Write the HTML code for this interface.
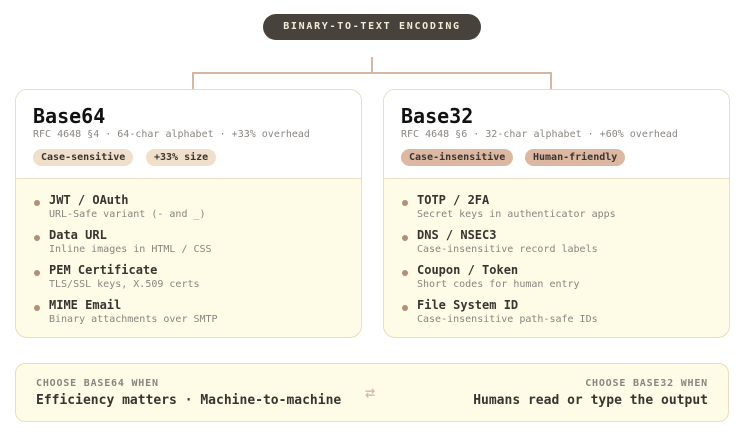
<!DOCTYPE html>
<html><head><meta charset="utf-8"><style>
*{margin:0;padding:0;box-sizing:border-box}
body{width:749px;height:443px;background:#fff;font-family:"DejaVu Sans Mono","Liberation Mono",monospace;position:relative;overflow:hidden;color:#3a3430}
.a{position:absolute;white-space:nowrap}
.pill{left:263px;top:14px;width:218px;height:26px;border-radius:13px;background:#48423d;color:#f3ead8;font-size:10px;font-weight:bold;letter-spacing:1.7px;text-align:center;line-height:26px}
.ln{position:absolute;background:#d6b7a3}
.card{position:absolute;top:89px;width:347px;height:249px;border:1px solid #ecdcc2;border-radius:12px;overflow:hidden;background:#fefbe6}
.hd{height:89px;background:#fff;border-bottom:1px solid #ecdcc2;position:relative}
.t{position:absolute;left:17px;top:14px;font-size:20px;font-weight:bold;color:#111}
.s{position:absolute;left:17px;top:39px;font-size:10px;color:#8a8580}
.tag{position:absolute;top:59px;height:17px;line-height:17px;border-radius:9px;padding:0 8px;font-size:10px;font-weight:bold;color:#3a3430}
.it{position:absolute;left:17px}
.it i{position:absolute;left:1px;top:6px;width:6px;height:6px;border-radius:50%;background:#b09078}
.it b{position:absolute;left:16px;top:-1px;font-size:12px;color:#3a3430;white-space:nowrap}
.it span{position:absolute;left:16px;top:15px;font-size:10px;color:#8a8580;white-space:nowrap}
.bot{position:absolute;left:15px;top:363px;width:714px;height:59px;border:1px solid #ecdcc2;border-radius:10px;background:#fefbe6}
.lb{font-size:10px;font-weight:bold;color:#8a8580;letter-spacing:0.8px}
.mt{font-size:13px;font-weight:bold;color:#3a3430}
</style></head><body>
<div class="a pill">BINARY-TO-TEXT ENCODING</div>
<div class="ln" style="left:371px;top:57px;width:2px;height:17px"></div>
<div class="ln" style="left:192px;top:72px;width:360px;height:2px"></div>
<div class="ln" style="left:192px;top:72px;width:2px;height:18px"></div>
<div class="ln" style="left:550px;top:72px;width:2px;height:18px"></div>

<div class="card" style="left:15px">
<div class="hd">
<div class="t">Base64</div>
<div class="s">RFC 4648 §4 · 64-char alphabet · +33% overhead</div>
<div class="tag" style="left:17px;background:#f0e0cb">Case-sensitive</div>
<div class="tag" style="left:130px;background:#f0e0cb">+33% size</div>
</div>
<div class="it" style="top:104px"><i></i><b>JWT / OAuth</b><span>URL-Safe variant (- and _)</span></div>
<div class="it" style="top:139px"><i></i><b>Data URL</b><span>Inline images in HTML / CSS</span></div>
<div class="it" style="top:174px"><i></i><b>PEM Certificate</b><span>TLS/SSL keys, X.509 certs</span></div>
<div class="it" style="top:209px"><i></i><b>MIME Email</b><span>Binary attachments over SMTP</span></div>
</div>

<div class="card" style="left:383px">
<div class="hd">
<div class="t">Base32</div>
<div class="s">RFC 4648 §6 · 32-char alphabet · +60% overhead</div>
<div class="tag" style="left:17px;background:#dcb8a3">Case-insensitive</div>
<div class="tag" style="left:141px;background:#dcb8a3">Human-friendly</div>
</div>
<div class="it" style="top:104px"><i></i><b>TOTP / 2FA</b><span>Secret keys in authenticator apps</span></div>
<div class="it" style="top:139px"><i></i><b>DNS / NSEC3</b><span>Case-insensitive record labels</span></div>
<div class="it" style="top:174px"><i></i><b>Coupon / Token</b><span>Short codes for human entry</span></div>
<div class="it" style="top:209px"><i></i><b>File System ID</b><span>Case-insensitive path-safe IDs</span></div>
</div>

<div class="bot">
<div class="a lb" style="left:20px;top:14px">CHOOSE BASE64 WHEN</div>
<div class="a mt" style="left:20px;top:29px">Efficiency matters · Machine-to-machine</div>
<div class="a" style="left:349px;top:19px;font-size:17px;color:#d6b7a3">⇄</div>
<div class="a lb" style="right:20px;top:14px">CHOOSE BASE32 WHEN</div>
<div class="a mt" style="right:20px;top:29px">Humans read or type the output</div>
</div>
</body></html>
